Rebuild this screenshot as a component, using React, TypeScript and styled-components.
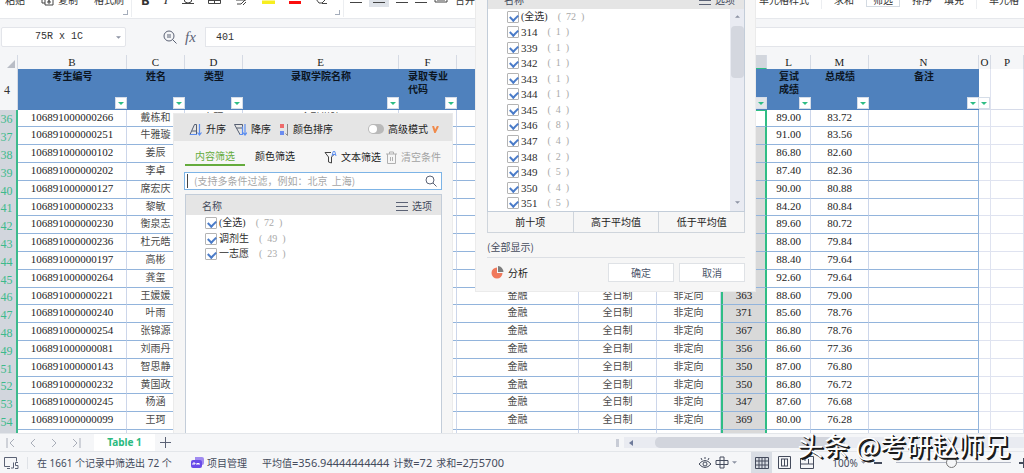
import React from "react";
import styled, { createGlobalStyle, css } from "styled-components";

const sans = `"Noto Sans", "Noto Sans CJK SC", sans-serif`;
const cjk = `"Noto Sans CJK SC", sans-serif`;
const serif = `"Liberation Serif", "Noto Sans CJK SC", serif`;
const mono = `"Liberation Mono", "Noto Sans CJK SC", monospace`;

const Global = createGlobalStyle`
  * { box-sizing: border-box; }
  body { margin: 0; font: 10px/14px ${cjk}; color: #333; background: #f5f6f8; }
  button, input { font: inherit; color: inherit; margin: 0; padding: 0; border: 0; background: none; border-radius: 0; }
  svg { display: block; flex: none; }
`;

const Page = styled.div`
  position: relative;
  display: flex;
  flex-direction: column;
  height: 100vh;
  overflow: hidden;
`;

/* ---------- ribbon ---------- */

const Ribbon = styled.header`
  display: flex;
  flex: none;
  height: 19px;
  overflow: hidden;
  background: #fff;
  border-bottom: 1px solid #e6e8ec;
`;
const RibbonGroup = styled.div<{ $gap: number; $left: number; $right: number; $push?: boolean }>`
  display: flex;
  align-items: center;
  gap: ${(p) => p.$gap}px;
  height: 20px;
  margin-top: -10px;
  padding: 0 ${(p) => p.$right}px 0 ${(p) => p.$left}px;
  margin-left: ${(p) => (p.$push ? "auto" : "0")};
  flex: none;
`;
const RibbonDivider = styled.i`
  width: 1px;
  height: 17px;
  background: #eceef1;
  flex: none;
`;
const RibbonButton = styled.button<{ $on?: boolean; $boxed?: boolean }>`
  display: flex;
  align-items: center;
  justify-content: center;
  gap: 4px;
  white-space: nowrap;
  color: #333;
  b, i { font: 700 13px/14px ${sans}; }
  i { font: italic 13px/14px "Liberation Serif", serif; }
  ${(p) => p.$on && css`height: 14px; width: 20px; background: #dfe3e9;`}
  ${(p) => p.$boxed && css`height: 14px; padding: 0 6px; border: 1px solid #d3dae2;`}
`;
const Corner = styled.i`
  align-self: flex-end;
  flex: none;
  width: 5px;
  height: 5px;
  margin: 0 3px 3px -4px;
  border: solid #a5adbb;
  border-width: 0 1px 1px 0;
`;

/* ---------- formula bar ---------- */

const FormulaBar = styled.div`
  display: flex;
  align-items: center;
  flex: none;
  height: 36px;
  padding-left: 1px;
  background: #f5f6f8;
`;
const NameBox = styled.div`
  display: flex;
  align-items: center;
  width: 125px;
  height: 20px;
  margin-right: 37px;
  background: #fff;
  border: 1px solid #e3e5ea;
  border-radius: 2px;
  font-family: ${mono};
  input { flex: 1; min-width: 0; text-align: center; }
  button { width: 9px; height: 18px; }
`;
const FormulaTools = styled.div`
  display: flex;
  align-items: center;
  gap: 8px;
  width: 42px;
  color: #5b6275;
`;
const FxButton = styled.button`
  font: italic 15px/18px "Liberation Serif", serif;
`;
const FormulaInput = styled.input`
  flex: 1;
  min-width: 0;
  height: 20px;
  padding-left: 10px;
  background: #fff;
  border: 1px solid #e3e5ea;
  border-right: 0;
  font-family: ${mono};
`;

/* ---------- sheet ---------- */

const Sheet = styled.main`
  position: relative;
  flex: 1;
  min-height: 0;
  overflow: hidden;
  background: #fff;
`;
const Grid = styled.table`
  width: 100%;
  table-layout: fixed;
  border-collapse: separate;
  border-spacing: 0;
  font-family: ${serif};
  td, th { padding: 0; overflow: hidden; white-space: nowrap; text-align: center; }
`;
const Letter = styled.th<{ $selected?: boolean }>`
  height: 14px;
  font: 11px/13px "Liberation Serif", serif;
  color: #222;
  background: ${(p) => (p.$selected ? "#d2d6dd" : "#f5f6f8")};
  border-right: 1px solid #d5dae4;
  ${(p) => p.$selected && css`border-bottom: 1px solid #2fbd85;`}
`;
const Field = styled.th<{ $plain?: boolean }>`
  position: relative;
  height: 41px;
  vertical-align: top;
  font: bold 10px/13px ${cjk};
  color: #0c1522;
  background: ${(p) => (p.$plain ? "#fff" : "#4f81bd")};
  border-bottom: 1px solid ${(p) => (p.$plain ? "#d6dbe9" : "#4f81bd")};
  ${(p) => p.$plain && css`border-right: 1px solid #dfe3f0;`}
`;
const FieldTitle = styled.span`
  display: inline-block;
  text-align: left;
  white-space: pre-line;
`;
const FilterButton = styled.button<{ $active?: boolean }>`
  position: absolute;
  right: 0;
  bottom: 0;
  display: flex;
  align-items: center;
  justify-content: center;
  width: 12px;
  height: 12px;
  background: ${(p) => (p.$active ? "#e2e6ea" : "#fff")};
  border: 1px solid #d5dde8;
`;
const RowHead = styled.th<{ $selected?: boolean }>`
  font: 12px/16px "Liberation Serif", serif;
  color: ${(p) => (p.$selected ? "#3dba8c" : "#333")};
  background: ${(p) => (p.$selected ? "#d2d6dd" : "#f5f6f8")};
  border-right: ${(p) => (p.$selected ? "2px solid #3dba8c" : "1px solid #d5dae4")};
  && { padding-right: 3px; }
  vertical-align: ${(p) => (p.$selected ? "bottom" : "middle")};
`;
const Row = styled.tr`
  height: 18px;
  &:nth-child(5n + 1) { height: 17px; }
`;
const Cell = styled.td<{ $kind?: "text" | "plain" | "edge" | "picked" | "active" }>`
  color: #4b4b4b;
  line-height: 15px;
  vertical-align: top;
  border-right: 1px solid #ccd6ea;
  border-bottom: 1px solid #92b4dc;
  ${(p) => !p.$kind && css`font-size: 11px; color: #1c1c1c;`}
  ${(p) => p.$kind === "plain" && css`border-color: #dfe3f0;`}
  ${(p) => p.$kind === "edge" && css`border-right-color: #92b4dc;`}
  ${(p) =>
    (p.$kind === "picked" || p.$kind === "active") &&
    css`
      font-size: 11px;
      color: #1c1c1c;
      background: #d9d9d9;
      border-left: 2px solid #2fbd85;
      border-right: 2px solid #2fbd85;
    `}
  ${(p) => p.$kind === "active" && css`background: #fff; border-top: 1px solid #2fbd85;`}
`;

/* ---------- filter menus ---------- */

const Menu = styled.section<{ $x: number; $y: number; $w: number; $h?: number }>`
  position: absolute;
  left: ${(p) => p.$x}px;
  top: ${(p) => p.$y}px;
  width: ${(p) => p.$w}px;
  ${(p) => (p.$h ? `height: ${p.$h}px;` : "bottom: 0;")}
  display: flex;
  flex-direction: column;
  background: #f6f6f6;
  border: 1px solid #ebebeb;
  border-bottom-width: ${(p) => (p.$h ? 1 : 0)}px;
`;
const SortBar = styled.div`
  display: flex;
  align-items: center;
  flex: none;
  gap: 8px;
  height: 27px;
  padding: 3px 13px 0 15px;
  background: #e5e5e5;
`;
const ToolButton = styled.button<{ $muted?: boolean }>`
  display: flex;
  align-items: center;
  gap: 4px;
  white-space: nowrap;
  color: ${(p) => (p.$muted ? "#a3a3a3" : "#222")};
`;
const Toggle = styled.label`
  display: flex;
  align-items: center;
  gap: 4px;
  margin-left: auto;
  color: #222;
  input {
    appearance: none;
    width: 16px;
    height: 10px;
    border-radius: 5px;
    background: #b9b9b9;
  }
  input::after {
    content: "";
    display: block;
    width: 8px;
    height: 8px;
    margin: 1px;
    border-radius: 4px;
    background: #fff;
  }
`;
const TabBar = styled.div`
  display: flex;
  align-items: center;
  flex: none;
  height: 28px;
  padding: 4px 11px 0 0;
  margin: 0 0 3px 11px;
`;
const MenuTab = styled.button<{ $on?: boolean }>`
  width: 60px;
  height: 18px;
  color: ${(p) => (p.$on ? "#64ab3c" : "#222")};
  border-bottom: 2px solid ${(p) => (p.$on ? "#64ab3c" : "transparent")};
`;
const TabTools = styled.div`
  display: flex;
  gap: 5px;
  margin-left: auto;
`;
const SearchBox = styled.label`
  display: flex;
  align-items: center;
  flex: none;
  height: 18px;
  margin: 0 10px 4px;
  padding: 0 4px 0 2px;
  background: #fff;
  border: 1px solid #7db4e6;
  input { flex: 1; min-width: 0; height: 14px; padding-left: 6px; border-left: 1px solid #444; outline: 0; }
  input::placeholder { color: #a6a6a6; opacity: 1; }
`;
const ListBox = styled.div<{ $fill?: boolean }>`
  display: flex;
  flex-direction: column;
  flex: ${(p) => (p.$fill ? "1" : "none")};
  height: ${(p) => (p.$fill ? "auto" : "224px")};
  margin: 0 10px 0 11px;
  background: #fff;
  border: 1px solid #c3cdd9;
  border-bottom-width: ${(p) => (p.$fill ? 0 : 1)}px;
`;
const ListHead = styled.div`
  display: flex;
  justify-content: space-between;
  align-items: center;
  flex: none;
  height: 20px;
  padding: 2px 9px 0 16px;
  background: #e5e5e5;
  color: #444b5c;
`;
const MenuIcon = styled.span`
  display: flex;
  align-items: center;
  gap: 4px;
`;
const ListBody = styled.div<{ $short?: boolean }>`
  display: flex;
  flex: ${(p) => (p.$short ? "none" : "1")};
  height: ${(p) => (p.$short ? "47px" : "auto")};
  min-height: 0;
`;
const Options = styled.ul`
  display: flex;
  flex-direction: column;
  flex: 1;
  margin: 0;
  padding: 0 0 0 19px;
  list-style: none;
  li { flex: 1; min-height: 0; display: flex; align-items: center; }
`;
const Option = styled.label`
  display: flex;
  align-items: center;
  gap: 2px;
  font: 10px/14px ${serif};
  color: #2c2c2c;
  input {
    appearance: none;
    display: flex;
    width: 12px;
    height: 12px;
    background: #fff;
    border: 1px solid #b4b4b4;
    border-radius: 1px;
  }
  input:checked::after {
    content: "";
    width: 7px;
    height: 4px;
    margin: 2px 0 0 2px;
    border: solid #4a7bc8;
    border-width: 0 0 2px 2px;
    transform: rotate(-45deg);
  }
`;
const Name = styled.span<{ $digits?: boolean }>`
  font-size: ${(p) => (p.$digits ? 11 : 10)}px;
`;
const Count = styled.span`
  display: flex;
  gap: 5px;
  margin-left: 8px;
  color: #a9a9a9;
`;
const ScrollTrack = styled.div`
  display: flex;
  flex-direction: column;
  align-items: center;
  width: 14px;
  padding: 6px 0 7px;
  background: #e9ebf2;
  svg:last-child { margin-top: auto; }
`;
const ScrollThumb = styled.i`
  width: 13px;
  height: 52px;
  margin-top: 8px;
  border-radius: 4px;
  background: #d4d7df;
`;
const Presets = styled.div`
  display: grid;
  grid-template-columns: repeat(3, 1fr);
  flex: none;
  height: 21px;
  margin: 0 10px 0 11px;
  border: 1px solid #cfd5dc;
  border-width: 0 0 1px 1px;
  button { border-right: 1px solid #cfd5dc; color: #222; }
`;
const Summary = styled.p`
  flex: none;
  margin: 0 10px 0 11px;
  padding: 7px 0 3px;
  border-bottom: 1px solid #dcdfe4;
  color: #444b5c;
`;
const Actions = styled.div`
  display: flex;
  align-items: center;
  gap: 5px;
  flex: 1;
  margin: 0 10px 0 15px;
  padding-bottom: 4px;
`;
const DialogButton = styled.button`
  width: 66px;
  height: 19px;
  background: #fff;
  border: 1px solid #dfe2e6;
  color: #4d566b;
`;
const Analyse = styled(ToolButton)`
  margin-right: auto;
`;

/* ---------- bottom bars ---------- */

const SheetTabs = styled.nav`
  display: flex;
  align-items: center;
  flex: none;
  height: 19px;
  background: #f5f6f8;
  border-top: 1px solid #e3e6ea;
  border-bottom: 1px solid #e3e6ea;
`;
const Steps = styled.div`
  display: flex;
  justify-content: space-between;
  width: 94px;
  padding: 0 13px 0 6px;
  color: #a9aeb9;
`;
const SheetTab = styled.button`
  width: 61px;
  height: 17px;
  background: #fff;
  color: #2bba80;
  font: bold 10px/17px ${sans};
`;
const AddTab = styled.button`
  padding: 0 5px;
  color: #5b6275;
`;
const HScroll = styled.div`
  display: flex;
  align-items: center;
  gap: 5px;
  width: 408px;
  height: 100%;
  margin-left: auto;
`;
const Handle = styled.i`
  width: 3px;
  height: 8px;
  background: #c8ccd6;
`;
const HTrack = styled.div`
  display: flex;
  align-items: center;
  gap: 22px;
  flex: 1;
  height: 11px;
  padding-left: 5px;
  background: #e9ebf1;
`;
const HThumb = styled.i`
  width: 190px;
  height: 11px;
  border-radius: 5px;
  background: #d2d5dd;
`;
const StatusBar = styled.footer`
  display: flex;
  align-items: center;
  flex: none;
  height: 21px;
  background: #f5f6f8;
  color: #444b5c;
  font-family: ${sans};
  font-size: 10px;
  white-space: nowrap;
`;
const StatusItem = styled.div<{ $w: number }>`
  display: flex;
  align-items: center;
  gap: 3px;
  flex: none;
  width: ${(p) => p.$w}px;
`;
const StatusTotals = styled.div`
  display: flex;
  gap: 4px;
  b { font-weight: 400; font-size: 11px; }
`;
const ViewTools = styled.div`
  display: flex;
  align-items: center;
  height: 100%;
  margin-left: auto;
  width: 327px;
  flex: none;
`;
const ViewButton = styled.button<{ $w: number; $on?: boolean }>`
  display: flex;
  align-items: center;
  justify-content: center;
  gap: 3px;
  flex: none;
  width: ${(p) => p.$w}px;
  height: 100%;
  background: ${(p) => (p.$on ? "#d9dde4" : "none")};
`;
const Split = styled.i`
  width: 1px;
  height: 12px;
  margin: 0 4px 0 8px;
  background: #dfe2e7;
`;
const Zoom = styled.input`
  appearance: none;
  width: 115px;
  height: 12px;
  margin: 0 8px;
  background: linear-gradient(#b3b8c4, #b3b8c4) center / 100% 1px no-repeat;
  &::-webkit-slider-thumb {
    appearance: none;
    width: 11px;
    height: 11px;
    border: 1px solid #777;
    border-radius: 50%;
    background: #f5f6f8;
  }
`;
const Watermark = styled.div`
  position: absolute;
  right: 14px;
  bottom: 9px;
  font: 26px/38px ${cjk};
  color: #fff;
  white-space: nowrap;
  text-shadow: 1px 1px 0 #1a1a1a, 2px 2px 0 #1a1a1a;
  pointer-events: none;
`;

/* ---------- icons ---------- */

const Caret = ({ color = "#8d93a3", up = false, w = 5 }) => (
  <svg width={w} height="3" viewBox="0 0 6 3"><path d={up ? "M0 3h6L3 0z" : "M0 0h6L3 3z"} fill={color} /></svg>
);
const Line = ({ d, w = 12, h = 12, color = "currentColor", sw = 1 }: { d: string; w?: number; h?: number; color?: string; sw?: number }) => (
  <svg width={w} height={h} viewBox={`0 0 ${w} ${h}`} fill="none" stroke={color} strokeWidth={sw}><path d={d} /></svg>
);
const SortUp = () => (
  <svg width="13" height="13" viewBox="0 0 13 13" fill="none"><path d="M1 11.5 5.500 1.500h2v10M3 8h4.500" stroke="#555e70" /><path d="M1 11.5h7M10.500 1v11M8.500 9.500l2 2.500 2-2.500" stroke="#5b8def" strokeWidth="1.2" /></svg>
);
const SortDown = () => (
  <svg width="13" height="13" viewBox="0 0 13 13" fill="none"><path d="M.5 1.500h8v10H6zM2.500 5H8" stroke="#555e70" /><path d="M5.500 11.500h3v-8M11 1v11M9 9.500l2 2.500 2-2.500" stroke="#5b8def" strokeWidth="1.2" /></svg>
);
const ColorSort = () => (
  <svg width="10" height="13" viewBox="0 0 10 13"><path d="M1 1h4v4H1z" fill="#ee6a6a" /><path d="M1 8h4v4H1z" fill="#6a8cf0" /><path d="M8.500 1v11.500l-2-2" stroke="#888" fill="none" /></svg>
);
const Funnel = () => (
  <svg width="13" height="14" viewBox="0 0 13 14" fill="none"><path d="M7 2.500H1l3.500 4.500v5l3 1V7l2-2" stroke="#444" /><path d="m8 6 1.200-4.500h1.600L12 6M8.500 4.500h3" stroke="#5b8def" /></svg>
);
const Trash = () => <Line w={11} h={13} color="#b0b0b0" d="M0 3h11M3.500 3V1h4v2M1.500 3v9.500h8V3M4.500 6v4M6.500 6v4" />;
const Glass = () => <Line w={12} h={12} color="#5b6275" d="M9 5A4 4 0 1 1 1 5a4 4 0 0 1 8 0zM8 8l3.500 3.500" />;
const Bars = () => <Line w={12} h={9} color="#5b6275" d="M0 .5h12M0 4.500h12M0 8.500h12" />;
const Pie = () => (
  <svg width="13" height="13" viewBox="0 0 13 13"><path d="M6 1.500V7h5.500A5.500 5.500 0 1 1 6 1.500z" fill="#f0795c" /><path d="M7 0a6 6 0 0 1 5.500 6H7z" fill="#7d7d7d" /></svg>
);

/* ---------- data ---------- */

const fields: [string, string, boolean?][] = [
  ["B", "考生编号"], ["C", "姓名"], ["D", "类型"], ["E", "录取学院名称"], ["F", "录取专业\n代码"],
  ["", ""], ["", ""], ["", ""], ["", ""],
  ["L", "复试\n成绩"], ["M", "总成绩"], ["N", "备注"], ["O", "", true], ["P", "", true],
];
const widths = [18, 109, 58, 58, 156, 58, 122, 78, 64, 46, 44, 58, 110, 12];

const rows: [number, string, string, string, string, string][] = [
  [36, "266", "戴栋和", "", "89.00", "83.72"],
  [37, "251", "牛雅璇", "", "91.00", "83.56"],
  [38, "102", "姜辰", "", "86.80", "82.60"],
  [39, "202", "李卓", "", "87.40", "82.36"],
  [40, "127", "席宏庆", "", "90.00", "80.88"],
  [41, "233", "黎敏", "", "84.20", "80.84"],
  [42, "230", "衡泉志", "", "89.60", "80.72"],
  [43, "236", "杜元皓", "", "88.00", "79.84"],
  [44, "197", "高彬", "", "88.40", "79.64"],
  [45, "264", "龚玺", "", "92.60", "79.64"],
  [46, "221", "王媛媛", "363", "88.60", "79.00"],
  [47, "240", "叶雨", "371", "85.60", "78.76"],
  [48, "254", "张锦源", "367", "86.80", "78.76"],
  [49, "081", "刘雨丹", "356", "86.60", "77.36"],
  [51, "143", "智思静", "350", "87.00", "76.80"],
  [52, "232", "黄国政", "350", "86.80", "76.72"],
  [53, "245", "杨涵", "347", "87.60", "76.68"],
  [54, "099", "王珂", "369", "80.00", "76.28"],
];

const scores: [string, number][] = [
  ["(全选)", 72], ["314", 1], ["339", 1], ["342", 1], ["343", 1], ["344", 1], ["345", 4],
  ["346", 8], ["347", 4], ["348", 2], ["349", 5], ["350", 4], ["351", 5],
];
const kinds: [string, number][] = [["(全选)", 72], ["调剂生", 49], ["一志愿", 23]];

const OptionList = ({ items }: { items: [string, number][] }) => (
  <Options>
    {items.map(([name, count]) => (
      <li key={name}>
        <Option>
          <input type="checkbox" defaultChecked />
          <Name $digits={/^\d/.test(name)}>{name}</Name>
          <Count><span>(</span><span>{count}</span><span>)</span></Count>
        </Option>
      </li>
    ))}
  </Options>
);

const ListTitle = () => (
  <ListHead><span>名称</span><MenuIcon><Bars />选项</MenuIcon></ListHead>
);

export default function App() {
  return (
    <Page>
      <Global />
      <Ribbon>
        <RibbonGroup $gap={16} $left={5} $right={3}>
          <RibbonButton>粘贴</RibbonButton>
          <RibbonButton><Line d="M1 1h7v7M4 4h8v7H4zM1 1v8h3M8 6v4M6 8h4" w={13} color="#444" />复制</RibbonButton>
          <RibbonButton>格式刷</RibbonButton>
        </RibbonGroup>
        <Corner />
        <RibbonDivider />
        <RibbonGroup $gap={14} $left={9} $right={11}>
          <RibbonButton><b>B</b></RibbonButton>
          <RibbonButton><i>I</i></RibbonButton>
          <RibbonButton><Line d="M2 0v5a4 4 0 0 0 8 0V0M0 9.500h12" color="#444" /></RibbonButton>
          <RibbonButton><Line d="M.5.500h12v9H.5zM6.500.500v9M.5 6.500h12" w={13} h={13} color="#444" /></RibbonButton>
          <RibbonButton><Line d="M1 6h10M2 10h4l5-5M8 11l3-3" w={13} color="#444" /></RibbonButton>
          <RibbonButton><svg width="13" height="8"><path d="M0 4.500h13V8H0z" fill="#f7ee1f" /></svg></RibbonButton>
          <RibbonButton><svg width="12" height="8"><path d="M0 5h12v3H0z" fill="#fb0d0d" /></svg></RibbonButton>
          <RibbonButton><Line d="M1 5l5-5 5 5-4 4H4zM7 9.500h5" w={13} color="#444" /></RibbonButton>
        </RibbonGroup>
        <Corner />
        <RibbonDivider />
        <RibbonGroup $gap={7} $left={6} $right={0}>
          {[0, 1, 2, 3].map((n) => (
            <RibbonButton key={n} $on={n === 1}><Line d="M0 .5h12M0 5.500h12" h={6} color="#444" /></RibbonButton>
          ))}
          <RibbonButton><Line d="M1 0v5h12V0M3 3h8" w={14} h={6} color="#444" /></RibbonButton>
          <RibbonButton>合并</RibbonButton>
        </RibbonGroup>
        <RibbonGroup $gap={12} $left={0} $right={5} $push>
          <RibbonButton>单元格样式</RibbonButton>
          <RibbonDivider />
          <RibbonButton>求和</RibbonButton>
          <RibbonButton $boxed>筛选</RibbonButton>
          <RibbonButton>排序</RibbonButton>
          <RibbonButton>填充</RibbonButton>
          <RibbonDivider />
          <RibbonButton>单元格</RibbonButton>
        </RibbonGroup>
      </Ribbon>

      <FormulaBar>
        <NameBox>
          <input aria-label="名称框" defaultValue="75R x 1C" />
          <button aria-label="展开名称"><Caret /></button>
        </NameBox>
        <FormulaTools>
          <Line w={14} h={14} d="M11 6A5 5 0 1 1 1 6a5 5 0 0 1 10 0zM9.500 9.500l4 4M4 5h4M4 7h4" />
          <FxButton>fx</FxButton>
        </FormulaTools>
        <FormulaInput aria-label="编辑栏" defaultValue="401" />
      </FormulaBar>

      <Sheet>
        <Grid>
          <colgroup>
            {widths.map((w, i) => <col key={i} width={w} />)}
            <col />
          </colgroup>
          <thead>
            <tr>
              <Letter><svg width="17" height="13"><path d="M15 4v8H7z" fill="#b9bdc6" /></svg></Letter>
              {fields.map(([letter], i) => <Letter key={i} $selected={i === 8}>{letter}</Letter>)}
            </tr>
            <tr>
              <RowHead>4</RowHead>
              {fields.map(([letter, title, plain], i) => (
                <Field key={i} $plain={plain}>
                  <FieldTitle>{title}</FieldTitle>
                  {letter !== "P" && <FilterButton $active={i === 8} aria-label="筛选"><Caret color="#2fbd85" w={6} /></FilterButton>}
                </Field>
              ))}
            </tr>
          </thead>
          <tbody>
            {rows.map(([n, id, name, score, retest, total], i) => (
              <Row key={n}>
                <RowHead $selected>{n}</RowHead>
                <Cell>106891000000{id}</Cell>
                <Cell $kind="text">{name}</Cell>
                <Cell $kind="text">{i === 0 && "专硕"}</Cell>
                <Cell $kind="text">{i === 0 && "金融学院"}</Cell>
                <Cell>{i === 0 && "025100"}</Cell>
                <Cell $kind="text">{i > 9 && "金融"}</Cell>
                <Cell $kind="text">{i > 9 && "全日制"}</Cell>
                <Cell $kind="text">{i > 9 && "非定向"}</Cell>
                <Cell $kind={i === 0 ? "active" : "picked"}>{score}</Cell>
                <Cell>{retest}</Cell>
                <Cell>{total}</Cell>
                <Cell $kind="edge" />
                <Cell $kind="plain" />
                <Cell $kind="plain" />
              </Row>
            ))}
            <Row>
              <RowHead $selected />
              {fields.map((_, i) => (
                <Cell key={i} $kind={i === 8 ? "picked" : i > 11 ? "plain" : i === 11 ? "edge" : "text"} />
              ))}
            </Row>
          </tbody>
        </Grid>

        <Menu $x={173} $y={58} $w={280}>
          <SortBar>
            <ToolButton><SortUp />升序</ToolButton>
            <ToolButton><SortDown />降序</ToolButton>
            <ToolButton><ColorSort />颜色排序</ToolButton>
            <Toggle><input type="checkbox" role="switch" />高级模式<Line w={7} h={7} color="#f08a4b" sw={2} d="M1 0l2 6 3-6" /></Toggle>
          </SortBar>
          <TabBar>
            <MenuTab $on>内容筛选</MenuTab>
            <MenuTab>颜色筛选</MenuTab>
            <TabTools>
              <ToolButton><Funnel />文本筛选</ToolButton>
              <ToolButton $muted><Trash />清空条件</ToolButton>
            </TabTools>
          </TabBar>
          <SearchBox>
            <input aria-label="搜索" placeholder="(支持多条件过滤，例如：北京  上海)" />
            <Glass />
          </SearchBox>
          <ListBox $fill>
            <ListTitle />
            <ListBody $short><OptionList items={kinds} /></ListBody>
          </ListBox>
        </Menu>
      </Sheet>

      <Menu $x={475} $y={-13} $w={281} $h={305}>
        <ListBox>
          <ListTitle />
          <ListBody>
            <OptionList items={scores} />
            <ScrollTrack>
              <Caret up />
              <ScrollThumb />
              <Caret />
            </ScrollTrack>
          </ListBody>
        </ListBox>
        <Presets>
          <button>前十项</button>
          <button>高于平均值</button>
          <button>低于平均值</button>
        </Presets>
        <Summary>(全部显示)</Summary>
        <Actions>
          <Analyse><Pie />分析</Analyse>
          <DialogButton>确定</DialogButton>
          <DialogButton>取消</DialogButton>
        </Actions>
      </Menu>

      <SheetTabs>
        <Steps>
          <Line w={10} h={10} d="M1 0v10M8 1L4 5l4 4" />
          <Line w={10} h={10} d="M7 1L3 5l4 4" />
          <Line w={10} h={10} d="M3 1l4 4-4 4" />
          <Line w={10} h={10} d="M9 0v10M2 1l4 4-4 4" />
        </Steps>
        <SheetTab>Table 1</SheetTab>
        <AddTab aria-label="新建工作表"><Line w={11} h={11} d="M5.500 0v11M0 5.500h11" /></AddTab>
        <HScroll>
          <Handle />
          <HTrack>
            <svg width="4" height="6"><path d="M4 0v6L0 3z" fill="#6f7b9b" /></svg>
            <HThumb />
          </HTrack>
        </HScroll>
      </SheetTabs>

      <StatusBar>
        <StatusItem $w={37}>
          <svg width="33" height="14" viewBox="0 0 33 14" fill="none" stroke="#5b6275"><path d="M10 10.500H4.500v-9h12v4M7 12.500h3M13.500 6.500v5.500h-2.500M18 6.500h-2.500v3H18v3h-3" /><path d="M27.500 1v12" stroke="#dfe2e7" /></svg>
        </StatusItem>
        <StatusItem $w={154}>在 1661 个记录中筛选出 72 个</StatusItem>
        <StatusItem $w={71}>
          <svg width="13" height="12" viewBox="0 0 13 12"><path d="M4 0h7a2 2 0 0 1 2 2v4a2 2 0 0 1-2 2H4z" fill="#a08bf0" /><rect y="3" width="11" height="8" rx="2" fill="#6a4be8" /><path d="M2 8V6h2v1H3M6 8V6l1 1 1-1v2" stroke="#fff" fill="none" /></svg>
          项目管理
        </StatusItem>
        <StatusTotals>
          <span>平均值<b>=356.94444444444</b></span>
          <span>计数<b>=72</b></span>
          <span>求和<b>=2</b>万<b>5700</b></span>
        </StatusTotals>
        <ViewTools>
          <ViewButton $w={16} aria-label="护眼模式"><Line w={14} h={14} d="M1 8q6-7 12 0q-6 7-12 0zM9 8a2 2 0 1 1-4 0a2 2 0 0 1 4 0zM7 1v2M3 2l1 2M11 2l-1 2" /></ViewButton>
          <ViewButton $w={26} aria-label="阅读模式"><Line w={14} h={13} d="M5 1h4v11H5zM1 4.500h12v4H1z" /><Caret /></ViewButton>
          <Split />
          <ViewButton $w={21} $on aria-label="普通视图"><Line w={14} h={12} d="M.5.5h13v11H.5zM.5 4h13M.5 8h13M4 .5v11M7 .5v11M10 .5v11" /></ViewButton>
          <ViewButton $w={24} aria-label="分页预览"><Line w={13} h={13} d="M.5.500h12v12H.5zM3.500 3v7M9.500 3v7M6.500 3v7M3 3h7M3 10h7" /></ViewButton>
          <ViewButton $w={22} aria-label="页面布局"><Line w={14} h={13} d="M.5.500h13v12H.5zM.5 8h8V3M5 1v4M8.500 8h5" /></ViewButton>
          <Split />
          <ViewButton $w={38} aria-label="缩放比例">100%<Caret /></ViewButton>
          <ViewButton $w={20} aria-label="缩小"><Line w={8} h={2} sw={2} d="M0 1h8" /></ViewButton>
          <Zoom type="range" aria-label="缩放" min={0} max={100} defaultValue={48} />
          <ViewButton $w={10} aria-label="放大"><Line w={10} h={10} sw={2} d="M5 0v10M0 5h10" /></ViewButton>
        </ViewTools>
      </StatusBar>

      <Watermark>头条 @考研赵师兄</Watermark>
    </Page>
  );
}
